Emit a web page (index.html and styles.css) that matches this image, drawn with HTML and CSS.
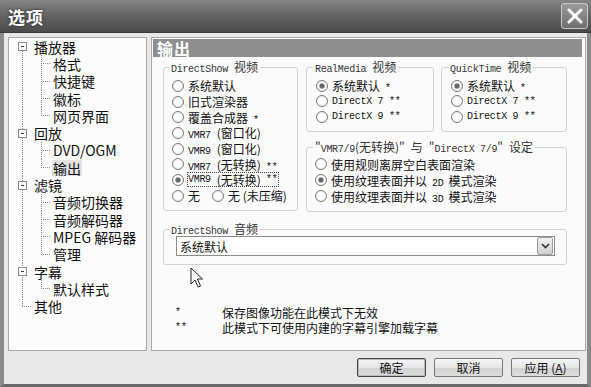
FILE: index.html
```html
<!DOCTYPE html>
<html lang="zh-CN">
<head>
    <meta charset="UTF-8">
    <title>选项</title>
    <link rel="stylesheet" href="styles.css">
</head>
<body>
    <div class="window">
        <!-- 标题栏 -->
        <div class="titlebar">
            <span class="title">选项</span>
            <span class="close">
                <svg width="16" height="16" viewBox="0 0 16 16"><path d="M2 2 L14 14 M14 2 L2 14" stroke="#fff" stroke-width="3" stroke-linecap="round"/></svg>
            </span>
        </div>

        <div class="client">
            <div class="main">
                <!-- 左侧树 -->
                <div class="tree">
                    <div class="row"><span class="g1 first"><span class="box"></span></span><span class="label">播放器</span></div>
                    <div class="row"><span class="g1 full"></span><span class="g2 tee"></span><span class="label">格式</span></div>
                    <div class="row"><span class="g1 full"></span><span class="g2 tee"></span><span class="label">快捷键</span></div>
                    <div class="row"><span class="g1 full"></span><span class="g2 tee"></span><span class="label">徽标</span></div>
                    <div class="row"><span class="g1 full"></span><span class="g2 end"></span><span class="label">网页界面</span></div>
                    <div class="row"><span class="g1 full"><span class="box"></span></span><span class="label">回放</span></div>
                    <div class="row"><span class="g1 full"></span><span class="g2 tee"></span><span class="label">DVD/OGM</span></div>
                    <div class="row"><span class="g1 full"></span><span class="g2 end"></span><span class="label sel">输出</span></div>
                    <div class="row"><span class="g1 full"><span class="box"></span></span><span class="label">滤镜</span></div>
                    <div class="row"><span class="g1 full"></span><span class="g2 tee"></span><span class="label">音频切换器</span></div>
                    <div class="row"><span class="g1 full"></span><span class="g2 tee"></span><span class="label">音频解码器</span></div>
                    <div class="row"><span class="g1 full"></span><span class="g2 tee"></span><span class="label">MPEG 解码器</span></div>
                    <div class="row"><span class="g1 full"></span><span class="g2 end"></span><span class="label">管理</span></div>
                    <div class="row"><span class="g1 full"><span class="box"></span></span><span class="label">字幕</span></div>
                    <div class="row"><span class="g1 full"></span><span class="g2 end"></span><span class="label">默认样式</span></div>
                    <div class="row"><span class="g1 last"></span><span class="label">其他</span></div>
                </div>

                <!-- 右侧面板 -->
                <div class="panel">
                    <div class="header">输出</div>
                    <div class="content">
                        <div class="top">
                            <div class="group ds-video">
                                <div class="legend"><span class="lat sp">DirectShow</span>视频</div>
                                <div class="opt"><span class="radio"></span><span>系统默认</span></div>
                                <div class="opt"><span class="radio"></span><span>旧式渲染器</span></div>
                                <div class="opt"><span class="radio"></span><span>覆盖合成器<span class="lat sl">*</span></span></div>
                                <div class="opt"><span class="radio"></span><span><span class="lat sp">VMR7</span>(窗口化)</span></div>
                                <div class="opt"><span class="radio"></span><span><span class="lat sp">VMR9</span>(窗口化)</span></div>
                                <div class="opt"><span class="radio"></span><span><span class="lat sp">VMR7</span>(无转换)<span class="lat sl">**</span></span></div>
                                <div class="opt"><span class="radio on"></span><span class="focus"><span class="lat sp">VMR9</span>(无转换)<span class="lat sl">**</span></span></div>
                                <div class="opt"><span class="radio"></span><span>无</span><span class="radio second"></span><span>无 (未压缩)</span></div>
                            </div>

                            <div class="right">
                                <div class="pair">
                                    <div class="group rm">
                                        <div class="legend"><span class="lat sp">RealMedia</span>视频</div>
                                        <div class="opt small"><span class="radio on"></span><span>系统默认<span class="lat sl">*</span></span></div>
                                        <div class="opt small"><span class="radio"></span><span class="lat">DirectX 7 **</span></div>
                                        <div class="opt small"><span class="radio"></span><span class="lat">DirectX 9 **</span></div>
                                    </div>
                                    <div class="group qt">
                                        <div class="legend"><span class="lat sp">QuickTime</span>视频</div>
                                        <div class="opt small"><span class="radio on"></span><span>系统默认<span class="lat sl">*</span></span></div>
                                        <div class="opt small"><span class="radio"></span><span class="lat">DirectX 7 **</span></div>
                                        <div class="opt small"><span class="radio"></span><span class="lat">DirectX 9 **</span></div>
                                    </div>
                                </div>
                                <div class="group vmr">
                                    <div class="legend">"<span class="lat">VMR7/9</span>(无转换)"<span class="gap"></span>与<span class="gap"></span>"<span class="lat">DirectX 7/9</span>"<span class="gap"></span>设定</div>
                                    <div class="opt"><span class="radio"></span><span>使用规则离屏空白表面渲染</span></div>
                                    <div class="opt"><span class="radio on"></span><span>使用纹理表面并以<span class="lat sb">2D</span>模式渲染</span></div>
                                    <div class="opt"><span class="radio"></span><span>使用纹理表面并以<span class="lat sb">3D</span>模式渲染</span></div>
                                </div>
                            </div>
                        </div>

                        <div class="group audio">
                            <div class="legend"><span class="lat sp">DirectShow</span>音频</div>
                            <div class="select">
                                <span class="value">系统默认</span>
                                <span class="drop">
                                    <svg width="9" height="6" viewBox="0 0 9 6"><path d="M1 1 L4.5 4.5 L8 1" fill="none" stroke="#333" stroke-width="1.6"/></svg>
                                </span>
                            </div>
                        </div>

                        <div class="notes">
                            <div class="note"><span class="mark">*</span>保存图像功能在此模式下无效</div>
                            <div class="note"><span class="mark">**</span>此模式下可使用内建的字幕引擎加载字幕</div>
                        </div>

                        <svg class="cursor" width="14" height="22" viewBox="0 0 14 22">
                            <path d="M1 1 L1 17 L5 13 L8 20 L10.5 19 L7.5 12 L12.5 12 Z" fill="#fff" stroke="#222" stroke-width="1"/>
                        </svg>
                    </div>
                </div>
            </div>

            <div class="buttons">
                <button class="btn default">确定</button>
                <button class="btn">取消</button>
                <button class="btn">应用 (<u>A</u>)</button>
            </div>
        </div>
    </div>
</body>
</html>
```

FILE: styles.css
```css
body {
    margin: 0;
    font-family: "Noto Sans CJK SC", sans-serif;
    background-color: #e6e6e6;
}
.window {
    width: 591px;
    height: 387px;
    display: flex;
    flex-direction: column;
    overflow: hidden;
}
.titlebar {
    height: 33px;
    flex: none;
    display: flex;
    align-items: center;
    justify-content: space-between;
    padding-left: 8px;
    box-sizing: border-box;
    background: linear-gradient(180deg, #858585 0%, #666 45%, #555 80%, #4a4a4a 100%);
    border-bottom: 1px solid #3c3c3c;
}
.title {
    color: #fff;
    font-size: 17px;
    font-weight: bold;
    text-shadow: 0 0 3px #222;
    letter-spacing: 1px;
}
.close {
    width: 25px;
    height: 24px;
    margin-right: 3px;
    display: flex;
    align-items: center;
    justify-content: center;
    border: 1px solid #c8c8c8;
    border-radius: 3px;
    background: linear-gradient(180deg, #9a9a9a, #6e6e6e);
}
.client {
    flex: 1;
    display: flex;
    flex-direction: column;
    border-left: 4px solid #8a8a8a;
    border-right: 4px solid #8a8a8a;
    border-bottom: 3px solid #6a6a6a;
    padding: 4px 1px 0 4px;
    background-color: #e8e8e8;
}
.main {
    display: flex;
    gap: 4px;
    height: 314px;
}

/* 树 */
.tree {
    width: 139px;
    flex: none;
    box-sizing: border-box;
    background-color: #fcfcfc;
    border: 1px solid #a8a8a8;
    font-size: 14px;
    color: #111;
}
.row {
    height: 17.3px;
    display: flex;
    align-items: center;
}
.g1, .g2 {
    height: 100%;
    flex: none;
    display: flex;
    align-items: center;
    background-repeat: no-repeat;
}
.g1 {
    width: 24px;
}
.g2 {
    width: 19px;
}
.g1.full {
    background-image: repeating-linear-gradient(180deg, #888 0 1px, transparent 1px 2px);
    background-position: 13px 0;
    background-size: 1px 100%;
}
.g1.first {
    background-image: repeating-linear-gradient(180deg, #888 0 1px, transparent 1px 2px);
    background-position: 13px 100%;
    background-size: 1px 50%;
}
.g1.last {
    background-image:
        repeating-linear-gradient(180deg, #888 0 1px, transparent 1px 2px),
        repeating-linear-gradient(90deg, #888 0 1px, transparent 1px 2px);
    background-position: 13px 0, 13px 50%;
    background-size: 1px 50%, 9px 1px;
}
.g2.tee {
    background-image:
        repeating-linear-gradient(180deg, #888 0 1px, transparent 1px 2px),
        repeating-linear-gradient(90deg, #888 0 1px, transparent 1px 2px);
    background-position: 8px 0, 8px 50%;
    background-size: 1px 100%, 9px 1px;
}
.g2.end {
    background-image:
        repeating-linear-gradient(180deg, #888 0 1px, transparent 1px 2px),
        repeating-linear-gradient(90deg, #888 0 1px, transparent 1px 2px);
    background-position: 8px 0, 8px 50%;
    background-size: 1px 50%, 9px 1px;
}
.box {
    width: 7px;
    height: 7px;
    margin-left: 9px;
    border: 1px solid #8a8a8a;
    background: linear-gradient(90deg, transparent 2px, #333 2px 5px, transparent 5px) no-repeat center / 7px 1px, #fff;
}
.label {
    white-space: nowrap;
    line-height: 16px;
    padding: 0 1px;
}
.label.sel {
    background-color: #e2e2e2;
}

/* 面板 */
.panel {
    width: 435px;
    flex: none;
    box-sizing: border-box;
    display: flex;
    flex-direction: column;
    background-color: #fbfbfb;
    border: 1px solid #a8a8a8;
}
.header {
    margin: 1px 3px 0 1px;
    height: 18px;
    line-height: 18px;
    padding-left: 4px;
    background-color: #8e8e8e;
    color: #fff;
    font-size: 16px;
    font-weight: bold;
    letter-spacing: 1px;
}
.content {
    position: relative;
    padding: 10px 0 0 11px;
    font-size: 12px;
    color: #111;
}
.lat {
    font-family: "Liberation Mono", monospace;
    font-size: 10px;
    letter-spacing: -0.3px;
}
.lat.sp {
    margin-right: 6px;
}
.lat.sl {
    margin-left: 5px;
}
.lat.sb {
    margin: 0 5px;
}
.gap {
    display: inline-block;
    width: 6px;
}
.top {
    display: grid;
    grid-template-columns: 135px 261px;
    column-gap: 8px;
    align-items: start;
    justify-content: start;
}
.right {
    display: flex;
    flex-direction: column;
    gap: 15px;
}
.pair {
    display: grid;
    grid-template-columns: 128px 126px;
    column-gap: 7px;
}
.group {
    padding: 0 0 0 8px;
    border: 1px solid #d2d2d2;
    border-radius: 3px;
    box-sizing: border-box;
    min-width: 0;
}
.legend {
    width: fit-content;
    margin: -7px 0 5px -3px;
    padding: 0 2px;
    height: 12px;
    line-height: 12px;
    font-size: 12px;
    white-space: nowrap;
    color: #333;
    background-color: #fbfbfb;
}
.ds-video {
    height: 144px;
}
.rm,
.qt {
    height: 65px;
    padding-left: 9px;
}
.vmr {
    height: 65px;
}
.vmr .legend {
    margin-bottom: 3px;
    margin-left: -2px;
}
.audio {
    width: 404px;
    height: 36px;
    margin-top: 17px;
    padding-left: 12px;
}
.audio .legend {
    margin-left: -7px;
    margin-bottom: 1px;
}
.opt {
    height: 15.7px;
    display: flex;
    align-items: center;
    white-space: nowrap;
}
.opt.small {
    height: 15.5px;
}
.vmr .opt {
    height: 16px;
}
.radio {
    width: 10px;
    height: 10px;
    flex: none;
    margin-right: 4px;
    border: 1px solid #7a7a7a;
    border-radius: 50%;
    background: radial-gradient(circle, #fff 40%, #e4e4e4 100%);
}
.radio.on {
    background: radial-gradient(circle, #666 0 2px, #aaa 2.5px, #fff 3.5px, #e4e4e4 100%);
}
.radio.second {
    margin-left: 12px;
}
.focus {
    display: flex;
    align-items: center;
    height: 13px;
    outline: 1px dotted #444;
    padding-right: 1px;
}
.select {
    width: 379px;
    height: 20px;
    box-sizing: border-box;
    display: flex;
    align-items: center;
    justify-content: space-between;
    border: 1px solid #8c8c8c;
    background-color: #fff;
}
.value {
    padding-left: 3px;
}
.drop {
    width: 14px;
    height: 16px;
    margin-right: 1px;
    display: flex;
    align-items: center;
    justify-content: center;
    border: 1px solid #9c9c9c;
    border-radius: 2px;
    background: linear-gradient(180deg, #f2f2f2, #cfcfcf);
}
.notes {
    margin-top: 40px;
    padding-left: 12px;
}
.note {
    height: 15px;
    display: flex;
    align-items: center;
}
.mark {
    width: 47px;
    font-family: "Liberation Mono", monospace;
    font-size: 10px;
}
.cursor {
    position: absolute;
    left: 38px;
    top: 210px;
}

/* 按钮 */
.buttons {
    display: flex;
    justify-content: flex-end;
    gap: 8px;
    margin: 7px 6px 0 0;
}
.btn {
    width: 69px;
    height: 19px;
    padding: 0;
    font-family: "Noto Sans CJK SC", sans-serif;
    font-size: 12px;
    line-height: 16px;
    color: #111;
    border: 1px solid #777;
    border-radius: 2px;
    background: linear-gradient(180deg, #f6f6f6 0%, #e6e6e6 50%, #d2d2d2 51%, #dcdcdc 100%);
}
.btn.default {
    border-color: #444;
    box-shadow: inset 0 0 0 1px #bbb;
}
```
